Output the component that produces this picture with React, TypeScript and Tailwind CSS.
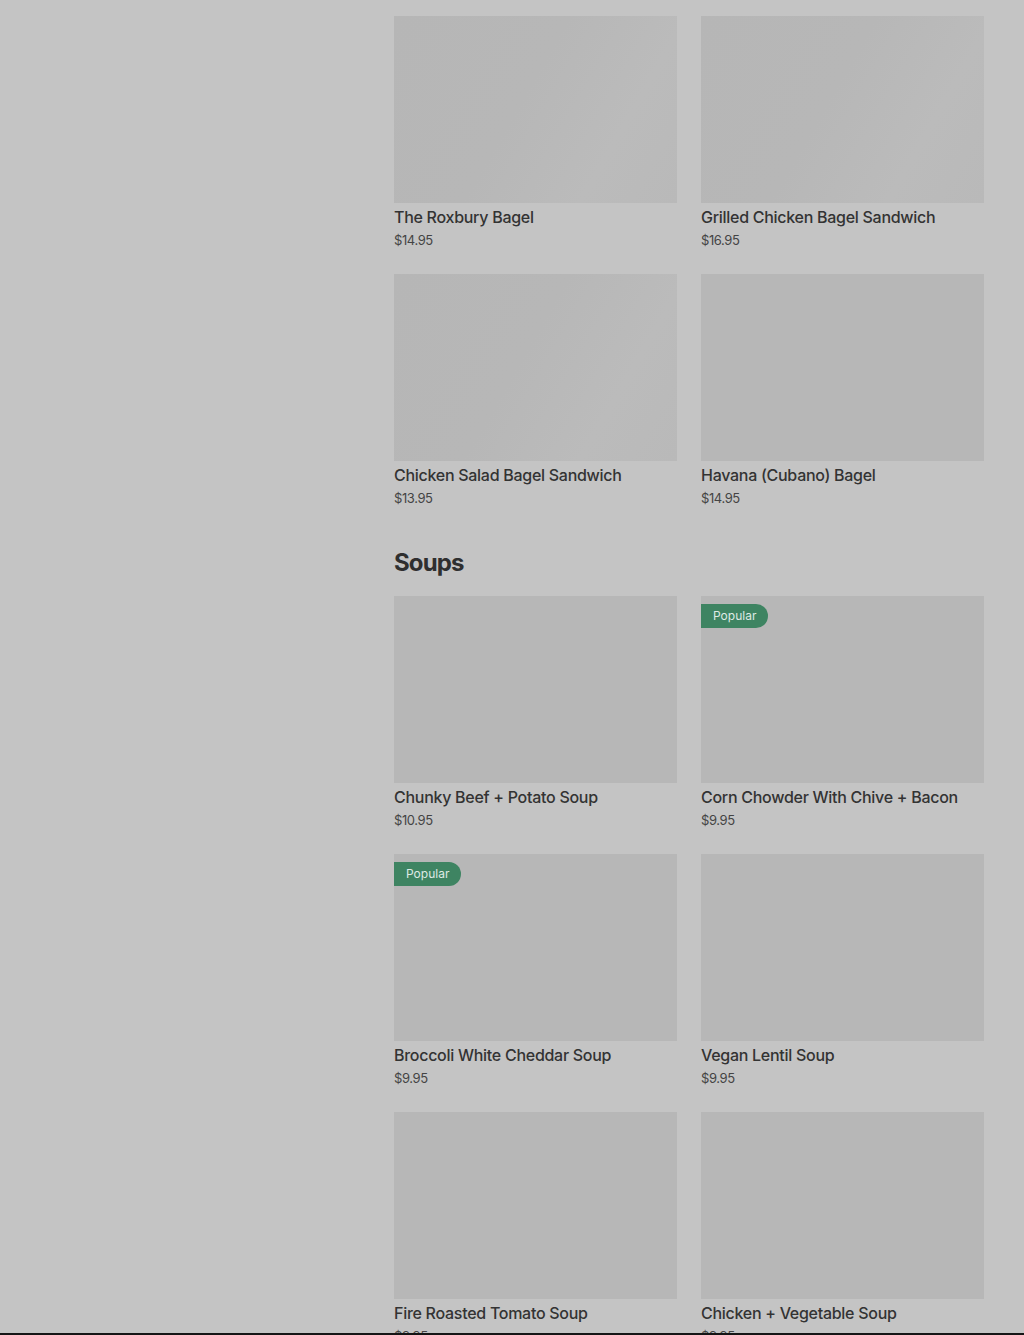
import React from "react";

type Item = { name: string; price: string; popular?: boolean; shimmer?: boolean };

const bagels: Item[] = [
  { name: "The Roxbury Bagel", price: "$14.95", shimmer: true },
  { name: "Grilled Chicken Bagel Sandwich", price: "$16.95", shimmer: true },
  { name: "Chicken Salad Bagel Sandwich", price: "$13.95", shimmer: true },
  { name: "Havana (Cubano) Bagel", price: "$14.95" },
];

const soups: Item[] = [
  { name: "Chunky Beef + Potato Soup", price: "$10.95" },
  { name: "Corn Chowder With Chive + Bacon", price: "$9.95", popular: true },
  { name: "Broccoli White Cheddar Soup", price: "$9.95", popular: true },
  { name: "Vegan Lentil Soup", price: "$9.95" },
  { name: "Fire Roasted Tomato Soup", price: "$9.95" },
  { name: "Chicken + Vegetable Soup", price: "$9.95" },
];

function Card({ item }: { item: Item }) {
  return (
    <div className="flex flex-col">
      <div
        className={
          "relative h-[187px] w-full " +
          (item.shimmer
            ? "bg-[linear-gradient(120deg,#b6b6b6_0%,#b7b7b7_45%,#bbbbbb_75%,#b9b9b9_100%)]"
            : "bg-[#b7b7b7]")
        }
      >
        {item.popular && (
          <span className="absolute left-0 top-2 flex h-6 items-center rounded-l-[3px] rounded-r-full bg-[#3e8462] pl-3 pr-3 text-[12px] leading-none text-[#dfeae4]">
            Popular
          </span>
        )}
      </div>
      <div className="mt-1 text-[16px] font-medium leading-5 tracking-[-0.28px] text-[#333333]">{item.name}</div>
      <div className="mt-[3px] text-[13px] leading-5 tracking-[-0.4px] text-[#444444]">{item.price}</div>
    </div>
  );
}

export default function App() {
  return (
    <div
      className="min-h-[1335px] w-full bg-[#c4c4c4]"
      style={{ fontFamily: "Inter, 'Noto Sans', sans-serif" }}
    >
      <div className="ml-[394px] mr-[40px] pt-4">
        <div className="grid grid-cols-2 gap-x-6 gap-y-6">
          {bagels.map((b) => (
            <Card key={b.name} item={b} />
          ))}
        </div>
        <h2 className="mb-[17px] mt-[39px] text-[24px] font-bold leading-8 tracking-[-0.9px] text-[#2f2f2f]">
          Soups
        </h2>
        <div className="grid grid-cols-2 gap-x-6 gap-y-6">
          {soups.map((s) => (
            <Card key={s.name} item={s} />
          ))}
        </div>
      </div>
      <div className="fixed bottom-0 left-0 h-[2px] w-full bg-[#151515]" />
    </div>
  );
}
